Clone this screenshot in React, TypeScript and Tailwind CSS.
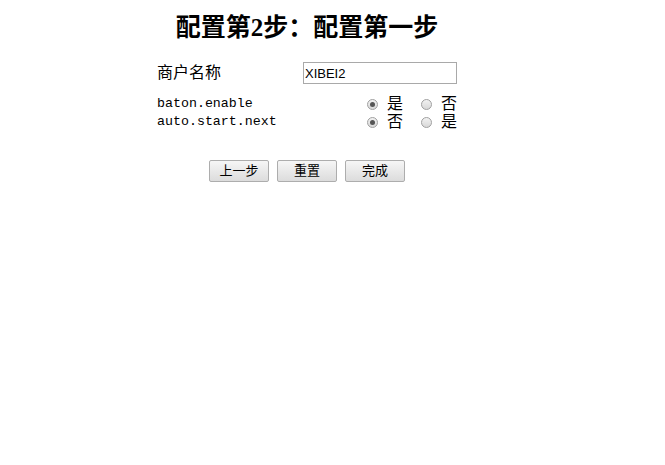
import React, { useState } from 'react';

const cjk = "font-['Liberation_Serif','Noto_Sans_CJK_SC',serif]";
const sans = "font-['Liberation_Sans','Noto_Sans_CJK_SC',sans-serif]";
const mono = "font-['Liberation_Mono',monospace]";

function Radio({ checked, onClick }: { checked: boolean; onClick: () => void }) {
  return (
    <span
      role="radio"
      aria-checked={checked}
      onClick={onClick}
      className="flex h-[11px] w-[11px] shrink-0 cursor-pointer items-center justify-center rounded-full border border-[#a0a0a0] bg-gradient-to-b from-[#f2f2f2] to-[#d8d8d8]"
    >
      {checked && <span className="h-[5px] w-[5px] rounded-full bg-[#555]" />}
    </span>
  );
}

function YesNo({ first, second, value, onChange }: { first: string; second: string; value: number; onChange: (v: number) => void }) {
  return (
    <div className={`flex items-center ${sans} text-[16px] leading-[18px] text-black`}>
      <Radio checked={value === 0} onClick={() => onChange(0)} />
      <span className="ml-[9px] w-[16px]">{first}</span>
      <span className="ml-[18px]">
        <Radio checked={value === 1} onClick={() => onChange(1)} />
      </span>
      <span className="ml-[9px] w-[16px]">{second}</span>
    </div>
  );
}

export default function App() {
  const [name, setName] = useState('XIBEI2');
  const [baton, setBaton] = useState(0);
  const [autoNext, setAutoNext] = useState(0);

  return (
    <div className="h-[465px] w-[665px] bg-white">
      <div className="ml-[157px] w-[300px] pt-[14px]">
        <h2 className={`text-center text-[25px] font-bold leading-[28px] text-black ${cjk}`}>配置第2步：配置第一步</h2>

        <div className="mt-[20px] flex h-[22px] items-center">
          <span className={`w-[146px] text-[16px] text-black ${sans}`}>商户名称</span>
          <input
            value={name}
            onChange={(e) => setName(e.target.value)}
            className={`h-[22px] w-[154px] border border-[#a9a9a9] px-[1px] text-[13px] text-black outline-none ${sans}`}
          />
        </div>

        <div className="mt-[11px] flex flex-col">
          <div className="flex h-[18px] items-center">
            <span className={`w-[210px] text-[13.3px] text-black ${mono}`}>baton.enable</span>
            <YesNo first="是" second="否" value={baton} onChange={setBaton} />
          </div>
          <div className="flex h-[18px] items-center">
            <span className={`w-[210px] text-[13.3px] text-black ${mono}`}>auto.start.next</span>
            <YesNo first="否" second="是" value={autoNext} onChange={setAutoNext} />
          </div>
        </div>

        <div className="mt-[29px] flex justify-center gap-[8px]">
          {['上一步', '重置', '完成'].map((b) => (
            <button
              key={b}
              type="button"
              className={`h-[22px] w-[60px] rounded-[2px] border border-[#adadad] bg-gradient-to-b from-[#f6f6f6] to-[#dcdcdc] text-[13px] text-black ${sans}`}
            >
              {b}
            </button>
          ))}
        </div>
      </div>
    </div>
  );
}
